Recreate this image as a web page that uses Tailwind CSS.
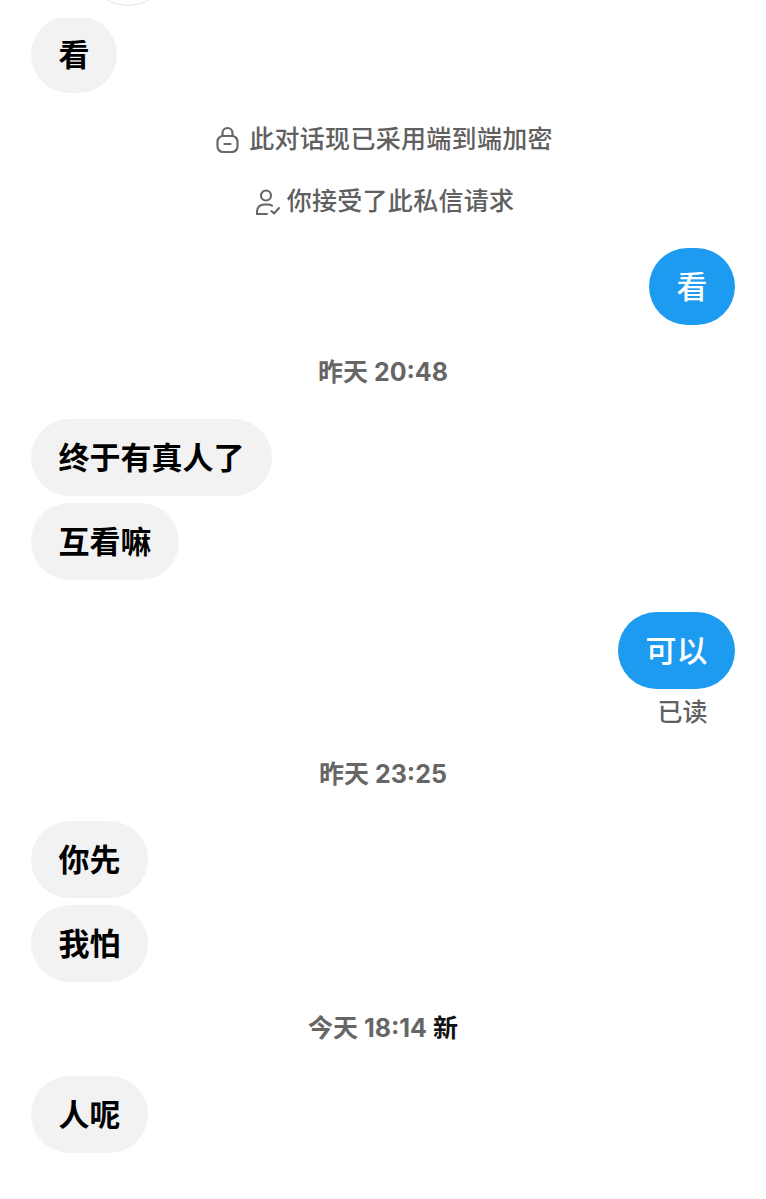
<!DOCTYPE html>
<html lang="zh">
<head>
<meta charset="utf-8">
<script src="https://cdn.jsdelivr.net/npm/@tailwindcss/browser@4"></script>
</head>
<body class="bg-white">
<div class="relative w-[766px] h-[1199px] overflow-hidden bg-white px-[31px] pt-[18px] font-['Inter','Noto_Sans_CJK_SC',sans-serif]">
  <div class="absolute left-[85px] top-[-80px] w-[86px] h-[86px] rounded-full border border-[#e4e4e4] bg-white"></div>

  <div class="h-[75px] w-[86px] overflow-hidden">
    <div class="-mt-[2px] flex h-[77px] w-[86px] items-center justify-center rounded-full bg-[#f2f2f2] pb-[1px] text-[31px] font-bold leading-none text-black">看</div>
  </div>

  <div class="mt-[28px] flex h-[36px] items-center justify-center gap-[9px] pl-[3px] pt-[1px] text-[25px] font-medium tracking-[0.3px] text-[#606060]">
    <svg width="24" height="28" viewBox="0 0 24 28" fill="none" stroke="#666666" stroke-width="2.2" stroke-linecap="round"><rect x="1.500" y="10" width="20" height="16" rx="5.500"/><path d="M6.500 10V7a5 5 0 0 1 10 0v3"/><path d="M8.500 18h6"/></svg>
    <span>此对话现已采用端到端加密</span>
  </div>

  <div class="mt-[26px] flex h-[36px] items-center justify-center gap-[6px] pl-[3px] pt-[1px] text-[25px] font-medium tracking-[0.3px] text-[#606060]">
    <svg width="26" height="28" viewBox="0 0 26 28" fill="none" stroke="#666666" stroke-width="2.1" stroke-linecap="round" stroke-linejoin="round"><circle cx="11" cy="7.500" r="5"/><path d="M2 26v-2.500c0-4 3-7 7-7h4c1.500 0 2.800.4 4 1.200"/><path d="M2 26h10"/><path d="M16.500 23l2.500 2.500 5-5.500"/></svg>
    <span>你接受了此私信请求</span>
  </div>

  <div class="mt-[29px] flex justify-end">
    <div class="flex h-[77px] w-[86px] items-center justify-center rounded-full bg-[#1d9bf0] text-[31px] font-medium leading-none text-white">看</div>
  </div>

  <div class="mt-[29px] h-[36px] text-center text-[25px] font-bold leading-[36px] text-[#666666]">昨天 20:48</div>

  <div class="mt-[29px] flex flex-col items-start gap-[8px]">
    <div class="flex h-[77px] items-center rounded-full bg-[#f2f2f2] px-[27.5px] text-[31px] font-bold leading-none text-black">终于有真人了</div>
    <div class="-mt-px flex h-[77px] items-center rounded-full bg-[#f2f2f2] px-[27.5px] text-[31px] font-bold leading-none text-black">互看嘛</div>
  </div>

  <div class="mt-[32px] flex justify-end">
    <div class="flex h-[77px] items-center rounded-full bg-[#1d9bf0] px-[27.5px] text-[31px] font-medium leading-none text-white">可以</div>
  </div>
  <div class="mt-[5px] flex h-[36px] justify-end pr-[27.5px] text-[25px] font-medium leading-[36px] text-[#606060]">已读</div>

  <div class="mt-[26px] h-[36px] text-center text-[25px] font-bold leading-[36px] text-[#666666]">昨天 23:25</div>

  <div class="mt-[29px] flex flex-col items-start gap-[8px]">
    <div class="flex h-[77px] items-center rounded-full bg-[#f2f2f2] px-[27.5px] text-[31px] font-bold leading-none text-black">你先</div>
    <div class="-mt-px flex h-[77px] items-center rounded-full bg-[#f2f2f2] px-[27.5px] text-[31px] font-bold leading-none text-black">我怕</div>
  </div>

  <div class="mt-[28px] h-[36px] text-center text-[25px] font-bold leading-[36px] text-[#666666]">今天 18:14 <span class="text-[#111111]">新</span></div>

  <div class="mt-[30px] flex flex-col items-start">
    <div class="flex h-[77px] items-center rounded-full bg-[#f2f2f2] px-[27.5px] text-[31px] font-bold leading-none text-black">人呢</div>
  </div>
</div>
</body>
</html>
